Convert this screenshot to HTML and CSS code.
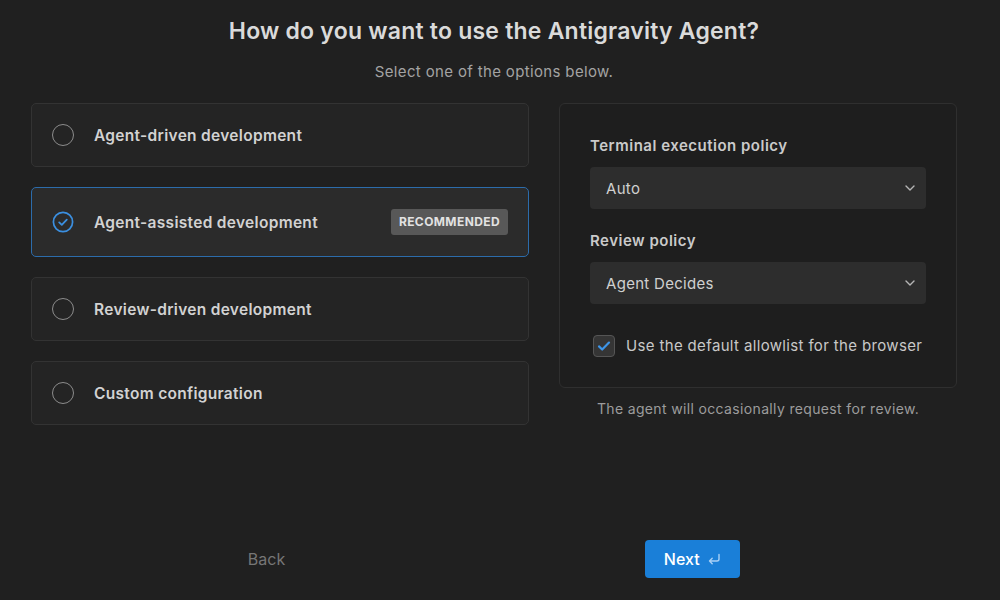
FILE: index.html
```html
<!DOCTYPE html>
<html lang="en">
<head>
<meta charset="utf-8">
<title>Antigravity Agent setup</title>
<link rel="stylesheet" href="styles.css">
</head>
<body>
<main class="page">
  <h1 class="title">How do you want to use the Antigravity Agent?</h1>
  <p class="subtitle">Select one of the options below.</p>

  <div class="columns">
    <div class="options">
      <div class="option">
        <span class="radio"></span>
        <span class="option-label">Agent-driven development</span>
      </div>
      <div class="option selected">
        <span class="radio checked">
          <svg viewBox="0 0 22 22" width="22" height="22"><circle cx="11" cy="11" r="9.6" fill="none" stroke="#3b8fe0" stroke-width="1.7"/><path d="M7.2 11.4l2.6 2.5 5-5.2" fill="none" stroke="#3b8fe0" stroke-width="1.8" stroke-linecap="round" stroke-linejoin="round"/></svg>
        </span>
        <span class="option-label">Agent-assisted development</span>
        <span class="badge">RECOMMENDED</span>
      </div>
      <div class="option">
        <span class="radio"></span>
        <span class="option-label">Review-driven development</span>
      </div>
      <div class="option">
        <span class="radio"></span>
        <span class="option-label">Custom configuration</span>
      </div>
    </div>

    <div class="side">
      <div class="panel">
        <div class="field">
          <div class="field-label">Terminal execution policy</div>
          <div class="select">
            <span>Auto</span>
            <svg class="chev" viewBox="0 0 10 6" width="10" height="6"><path d="M1 1l4 4 4-4" fill="none" stroke="#b5b5b5" stroke-width="1.4" stroke-linecap="round" stroke-linejoin="round"/></svg>
          </div>
        </div>
        <div class="field">
          <div class="field-label">Review policy</div>
          <div class="select">
            <span>Agent Decides</span>
            <svg class="chev" viewBox="0 0 10 6" width="10" height="6"><path d="M1 1l4 4 4-4" fill="none" stroke="#b5b5b5" stroke-width="1.4" stroke-linecap="round" stroke-linejoin="round"/></svg>
          </div>
        </div>
        <label class="check-row">
          <span class="checkbox">
            <svg viewBox="0 0 16 16" width="16" height="16"><path d="M3 8.4l3.2 3.1L13 4.6" fill="none" stroke="#3d95e8" stroke-width="2.2" stroke-linecap="round" stroke-linejoin="round"/></svg>
          </span>
          <span>Use the default allowlist for the browser</span>
        </label>
      </div>
      <p class="note">The agent will occasionally request for review.</p>
    </div>
  </div>

  <div class="footer">
    <button class="back">Back</button>
    <button class="next">Next
      <svg viewBox="0 0 16 14" width="16" height="14"><path d="M13 2.5v4.5a2 2 0 0 1-2 2H3.5M6.2 6.3L3.5 9l2.7 2.7" fill="none" stroke="#a9d0f5" stroke-width="1.4" stroke-linecap="round" stroke-linejoin="round"/></svg>
    </button>
  </div>
</main>
</body>
</html>
```

FILE: styles.css
```css
* { box-sizing: border-box; }

html, body {
  margin: 0;
  height: 100%;
  background: #202020;
}

body {
  font-family: Inter, "Noto Sans", "Liberation Sans", sans-serif;
  color: #d4d4d4;
}

.page {
  width: 926px;
  margin-left: 31px;
  display: flex;
  flex-direction: column;
  align-items: center;
}

.title {
  margin: 16px 0 0;
  font-size: 23px;
  line-height: 30px;
  font-weight: 600;
  color: #dadada;
  letter-spacing: 0.22px;
}

.subtitle {
  margin: 16px 0 0;
  font-size: 15px;
  line-height: 20px;
  letter-spacing: 0.35px;
  color: #a3a3a3;
}

.columns {
  margin-top: 21px;
  width: 100%;
  display: flex;
  gap: 30px;
  align-items: flex-start;
}

.options {
  width: 498px;
  display: flex;
  flex-direction: column;
  gap: 20px;
}

.option {
  display: flex;
  align-items: center;
  gap: 20px;
  padding: 20px;
  background: #242424;
  border: 1px solid #333333;
  border-radius: 5px;
}

.option.selected {
  min-height: 70px;
  background: #2b2b2b;
  border-color: #2c6cab;
}

.radio {
  width: 22px;
  height: 22px;
  flex: none;
  border-radius: 50%;
  border: 1.5px solid #8c8c8c;
}

.radio.checked {
  border: none;
  display: block;
}

.radio.checked svg { display: block; }

.option-label {
  flex: 1;
  font-size: 15.5px;
  line-height: 20px;
  padding-top: 2px;
  letter-spacing: 0.3px;
  font-weight: 600;
  color: #d2d2d2;
}

.badge {
  background: #585858;
  color: #e2e2e2;
  font-size: 12px;
  font-weight: 700;
  letter-spacing: 0.4px;
  line-height: 26px;
  height: 26px;
  padding: 0 8px;
  border-radius: 3px;
}

.side {
  width: 398px;
  display: flex;
  flex-direction: column;
  align-items: center;
}

.panel {
  width: 100%;
  padding: 32px 30px 30px 30px;
  background: #1e1e1e;
  border: 1px solid #2f2f2f;
  border-radius: 6px;
  display: flex;
  flex-direction: column;
}

.field + .field { margin-top: 22px; }

.field-label {
  font-size: 15px;
  line-height: 20px;
  letter-spacing: 0.5px;
  font-weight: 600;
  color: #cacaca;
  margin-bottom: 11px;
}

.select {
  height: 42px;
  background: #2d2d2d;
  border-radius: 4px;
  display: flex;
  align-items: center;
  justify-content: space-between;
  padding: 0 11px 0 16px;
  font-size: 15px;
  letter-spacing: 0.3px;
  color: #d0d0d0;
}

.chev { display: block; }

.check-row {
  margin-top: 31px;
  margin-left: 3px;
  display: flex;
  align-items: center;
  gap: 11px;
  font-size: 15px;
  line-height: 22px;
  letter-spacing: 0.35px;
  color: #c8c8c8;
}

.checkbox {
  width: 22px;
  height: 22px;
  flex: none;
  border-radius: 4px;
  background: #353535;
  border: 1px solid #555555;
  display: flex;
  align-items: center;
  justify-content: center;
}

.checkbox svg { display: block; }

.note {
  margin: 12px 0 0;
  font-size: 14px;
  line-height: 18px;
  letter-spacing: 0.35px;
  color: #9c9c9c;
}

.footer {
  margin-top: 115px;
  display: flex;
  align-items: center;
  gap: 360px;
}

.footer button {
  font-family: inherit;
  border: none;
  cursor: pointer;
}

.back {
  background: none;
  padding: 0;
  font-size: 16px;
  color: #767676;
}

.next {
  width: 95px;
  height: 38px;
  background: #1a7fd8;
  border-radius: 4px;
  color: #ffffff;
  font-size: 16px;
  font-weight: 500;
  display: flex;
  align-items: center;
  justify-content: center;
  gap: 6px;
}

.next svg { display: block; }
```
